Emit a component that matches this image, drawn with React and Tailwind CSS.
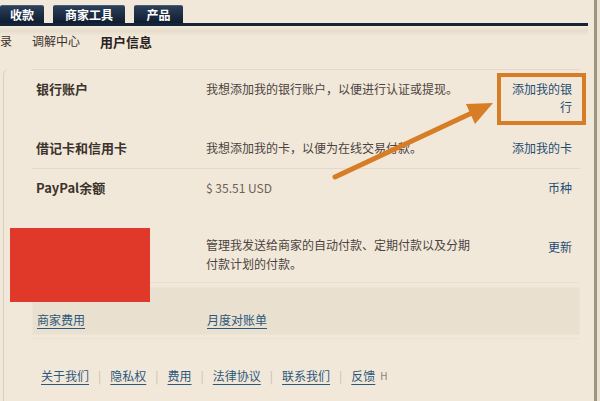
import React from "react";

const font = { fontFamily: '"Noto Sans CJK SC", "Noto Sans", sans-serif' };

function Tab({ children, w }) {
  return (
    <div
      className={`h-[18px] ${w} flex items-center justify-center rounded-t-[2px] border-t border-[#4a5d78] bg-gradient-to-b from-[#2c3f5a] to-[#101d30] text-[12px] font-bold text-white leading-none`}
    >
      {children}
    </div>
  );
}

function Row({ label, labelBold = true, desc, link, cls, descClass = "text-[#4a4440]" }) {
  return (
    <div className={`flex items-start ${cls}`}>
      <div className={`w-[174px] pl-[4px] text-[13px] leading-[18px] text-[#3b332c] ${labelBold ? "font-bold" : "font-semibold"}`}>
        {label}
      </div>
      <div className={`flex-1 text-[12px] leading-[18px] ${descClass}`}>{desc}</div>
      <div className="w-[80px] pr-[8px] text-right text-[12px] leading-[18px] text-[#1f4d72]">{link}</div>
    </div>
  );
}

function FooterLink({ children }) {
  return <span className="underline underline-offset-[3px] text-[#2b587c]">{children}</span>;
}

function Sep() {
  return <span className="text-[#c9bfae] mx-[9px]">|</span>;
}

export default function App() {
  return (
    <div style={font} className="relative w-[600px] h-[401px] overflow-hidden bg-[#f2e8da] flex">
      <div className="w-[594px] h-full flex flex-col">
        {/* tabs */}
        <div className="pt-[5px]">
          <div className="flex items-end gap-[9px]">
            <Tab w="w-[44px]">收款</Tab>
            <Tab w="w-[72px]">商家工具</Tab>
            <Tab w="w-[49px]">产品</Tab>
          </div>
          <div className="h-[3px] w-[588px] bg-[#16243a]" />
          <div className="h-[9px] w-[588px] bg-gradient-to-b from-[#f4ecdf] via-[#e6dccb] to-[#efe5d6]" />
        </div>
        {/* sub nav */}
        <div className="flex items-center h-[12px] text-[12px] leading-none text-[#3a322b]">
          <span className="ml-0">录</span>
          <span className="ml-[20px]">调解中心</span>
          <span className="ml-[20px] text-[13px] font-bold text-[#2a231d]">用户信息</span>
        </div>
        {/* body */}
        <div className="mt-[22px] flex-1 flex">
          <div className="w-[3px]" />
          <div className="flex-1 border-l border-[#d8cfbf] rounded-tl-[6px] pl-[28px] pr-[14px]">
            <div className="border-t border-[#e3d9c8]">
              <Row
                cls="h-[60px] pt-[10px]"
                label="银行账户"
                desc="我想添加我的银行账户，以便进行认证或提现。"
                link={
                  <>
                    添加我的银
                    <br />
                    行
                  </>
                }
              />
              <Row
                cls="h-[38px] pt-[9px]"
                label="借记卡和信用卡"
                desc="我想添加我的卡，以便为在线交易付款。"
                link="添加我的卡"
              />
            </div>
            <div className="border-t border-[#e3d9c8]">
              <Row
                cls="h-[38px] pt-[10px]"
                label="PayPal余额"
                labelBold={false}
                desc="$ 35.51 USD"
                descClass="text-[#6b6258]"
                link="币种"
              />
              <div className="flex items-start h-[75px] pt-[28px]">
                <div className="w-[174px]" />
                <div className="flex-1 text-[12px] leading-[19px] text-[#4a4440]">
                  管理我发送给商家的自动付款、定期付款以及分期
                  <br />
                  付款计划的付款。
                </div>
                <div className="w-[80px] pr-[8px] text-right text-[12px] leading-[18px] text-[#1f4d72] mt-[3px]">更新</div>
              </div>
            </div>
            <div className="border-t border-[#e8dfcf] pt-[4px]">
              <div className="h-[48px] bg-[#e9e0cf] border border-[#ece4d5] flex items-end pb-[6px] text-[12px] leading-[16px] text-[#2b587c]">
                <div className="w-[174px] pl-[4px]">
                  <span className="underline underline-offset-[3px]">商家费用</span>
                </div>
                <span className="underline underline-offset-[3px]">月度对账单</span>
              </div>
              <div className="h-[1px] mt-[3px] bg-[#ebe2d2]" />
            </div>
            <div className="mt-[31px] pl-[9px] flex items-center text-[12px] leading-none">
              <FooterLink>关于我们</FooterLink>
              <Sep />
              <FooterLink>隐私权</FooterLink>
              <Sep />
              <FooterLink>费用</FooterLink>
              <Sep />
              <FooterLink>法律协议</FooterLink>
              <Sep />
              <FooterLink>联系我们</FooterLink>
              <Sep />
              <FooterLink>反馈</FooterLink>
              <span className="ml-[5px] text-[10px] text-[#8a8275]">H</span>
            </div>
          </div>
        </div>
      </div>
      <div className="w-[3px] h-full bg-[#9f947f]" />
      <div className="w-[3px] h-full bg-[#ebe2d3]" />

      {/* redaction */}
      <div className="absolute left-[10px] top-[228px] w-[140px] h-[74px] bg-[#e0392a]" />
      {/* orange highlight box */}
      <div className="absolute left-[497px] top-[73px] w-[89px] h-[52px] border-[4px] border-[#d67d25]" />
      {/* arrow */}
      <svg className="absolute left-0 top-0" width="600" height="401" viewBox="0 0 600 401">
        <line x1="335" y1="177" x2="476" y2="111" stroke="#d67d25" strokeWidth="5" strokeLinecap="round" />
        <polygon points="493,103 466,104 475,124" fill="#d67d25" />
      </svg>
    </div>
  );
}
